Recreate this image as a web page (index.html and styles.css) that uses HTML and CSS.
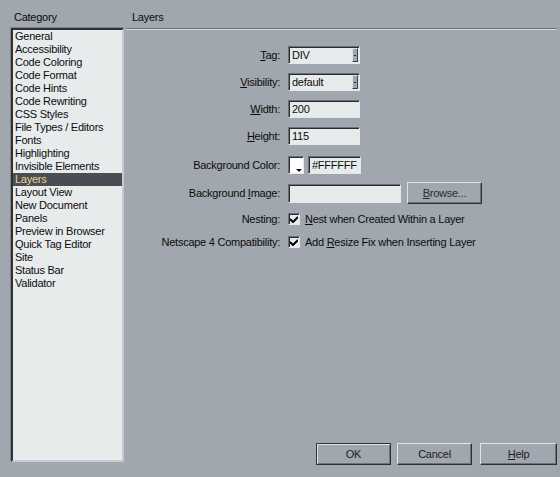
FILE: index.html
```html
<!DOCTYPE html>
<html lang='en'>

<head>
    <meta charset='UTF-8'>
    <title>Preferences</title>
    <link rel="stylesheet" href="styles.css">
</head>

<body>
    <div class="dialog">
        <div class="sidebar">
            <div class="caption">Category</div>
            <ul class="list">
                <li>General</li>
                <li>Accessibility</li>
                <li>Code Coloring</li>
                <li>Code Format</li>
                <li>Code Hints</li>
                <li>Code Rewriting</li>
                <li>CSS Styles</li>
                <li>File Types / Editors</li>
                <li>Fonts</li>
                <li>Highlighting</li>
                <li>Invisible Elements</li>
                <li class="selected">Layers</li>
                <li>Layout View</li>
                <li>New Document</li>
                <li>Panels</li>
                <li>Preview in Browser</li>
                <li>Quick Tag Editor</li>
                <li>Site</li>
                <li>Status Bar</li>
                <li>Validator</li>
            </ul>
        </div>
        <div class="main">
            <div class="caption etched">Layers</div>
            <div class="fields">
                <div class="field">
                    <label><u>T</u>ag:</label>
                    <div class="select"><span>DIV</span><i class="drop"></i></div>
                </div>
                <div class="field">
                    <label><u>V</u>isibility:</label>
                    <div class="select"><span>default</span><i class="drop"></i></div>
                </div>
                <div class="field">
                    <label><u>W</u>idth:</label>
                    <div class="input short">200</div>
                </div>
                <div class="field">
                    <label><u>H</u>eight:</label>
                    <div class="input short">115</div>
                </div>
                <div class="field spaced">
                    <label>Background Color:</label>
                    <div class="swatch"><i class="corner"></i></div>
                    <div class="input hex">#FFFFFF</div>
                </div>
                <div class="field tall">
                    <label>Background <u>I</u>mage:</label>
                    <div class="input long"></div>
                    <div class="button browse"><u>B</u>rowse...</div>
                </div>
                <div class="field check">
                    <label>Nesting:</label>
                    <div class="box">
                        <svg width="8" height="7" viewBox="0 0 8 7"><path d="M0 3 L3 6 L8 1" fill="none" stroke="#000" stroke-width="2"/></svg>
                    </div>
                    <span><u>N</u>est when Created Within a Layer</span>
                </div>
                <div class="field check">
                    <label>Netscape 4 Compatibility:</label>
                    <div class="box">
                        <svg width="8" height="7" viewBox="0 0 8 7"><path d="M0 3 L3 6 L8 1" fill="none" stroke="#000" stroke-width="2"/></svg>
                    </div>
                    <span>Add <u>R</u>esize Fix when Inserting Layer</span>
                </div>
            </div>
            <div class="footer">
                <div class="button default">OK</div>
                <div class="button cancel">Cancel</div>
                <div class="button help"><u>H</u>elp</div>
            </div>
        </div>
    </div>
</body>

</html>
```

FILE: styles.css
```css
* {
    padding: 0;
    margin: 0;
    box-sizing: border-box;
}

body {
    background: #a0a7ae;
    font-family: "Liberation Sans", Arial, sans-serif;
    font-size: 11px;
    letter-spacing: -0.25px;
    color: #0c0c0c;
}

.dialog {
    height: 477px;
    display: flex;
    flex-direction: row;
    padding: 9px 3px 12px 11px;
}

.caption {
    height: 19px;
    line-height: 17px;
    padding-left: 3px;
}

/* category list */
.sidebar {
    width: 113px;
    display: flex;
    flex-direction: column;
    margin-bottom: 3px;
}

.list {
    flex: 1;
    list-style: none;
    background: #e7ebec;
    border-left: 2px solid #2e3135;
    border-top: 2px solid #2e3135;
    border-right: 2px solid #c5cbd0;
    border-bottom: 2px solid #c5cbd0;
    box-shadow: -1px -1px 0 #7d848b;
}

.list li {
    height: 13px;
    line-height: 13px;
    padding-left: 2px;
    white-space: nowrap;
}

.list li.selected {
    background: #4b4d54;
    color: #e8d48a;
}

/* right panel */
.main {
    flex: 1;
    margin-left: 2px;
    display: flex;
    flex-direction: column;
}

.main .caption {
    padding-left: 6px;
}

.etched {
    border-bottom: 1px solid #d8dcdf;
    box-shadow: inset 0 -1px 0 #6c7279;
    height: 21px;
}

.fields {
    margin-top: 16px;
    display: flex;
    flex-direction: column;
    gap: 9px;
}

.field {
    display: flex;
    flex-direction: row;
    align-items: center;
    height: 18px;
}

.field label {
    width: 154px;
    text-align: right;
    margin-right: 8px;
    flex-shrink: 0;
}

.field.spaced {
    margin-top: 2px;
}

.field.tall {
    height: 22px;
    margin-top: -1px;
}

.field.check {
    height: 14px;
    margin-top: -1px;
}

.field.check + .field.check {
    margin-top: 0;
}

/* sunken controls */
.input,
.select,
.swatch,
.box {
    background: #e7ebec;
    border-left: 1px solid #6a7077;
    border-top: 1px solid #6a7077;
    border-right: 1px solid #e4e8ea;
    border-bottom: 1px solid #e4e8ea;
    box-shadow: inset 1px 1px 0 #2a2c30;
    height: 18px;
    line-height: 16px;
    padding-left: 3px;
}

.short {
    width: 72px;
}

.hex {
    width: 53px;
    margin-left: 4px;
}

.long {
    width: 113px;
    height: 19px;
}

.select {
    width: 72px;
    display: flex;
    flex-direction: row;
    justify-content: space-between;
}

.drop {
    width: 6px;
    margin: 1px 1px 1px 0;
    background: #a0a7ae;
    border-left: 1px solid #dde1e4;
    border-top: 1px solid #dde1e4;
    border-right: 1px solid #3c4045;
    border-bottom: 1px solid #3c4045;
    position: relative;
}

.drop::after {
    content: "";
    position: absolute;
    left: 1px;
    top: 6px;
    width: 2px;
    height: 1px;
    background: #222;
}

.swatch {
    width: 16px;
    background: #fff;
    position: relative;
    padding: 0;
}

.corner {
    position: absolute;
    right: 1px;
    bottom: 1px;
    width: 0;
    height: 0;
    border-left: 3px solid transparent;
    border-right: 3px solid transparent;
    border-top: 3px solid #111;
}

.box {
    width: 12px;
    height: 12px;
    padding: 0;
    display: flex;
    align-items: center;
    justify-content: center;
    margin-right: 5px;
}

/* raised buttons */
.button {
    width: 75px;
    height: 22px;
    line-height: 20px;
    text-align: center;
    background: #a0a7ae;
    color: #1e2024;
    border-left: 1px solid #dfe3e6;
    border-top: 1px solid #dfe3e6;
    border-right: 1px solid #2e3135;
    border-bottom: 1px solid #2e3135;
    box-shadow: inset -1px -1px 0 #6c7279;
}

.browse {
    margin-left: 6px;
    color: #2a2d31;
}

.button.default {
    outline: 1px solid #2e3135;
    outline-offset: -1px;
    border: 1px solid #2e3135;
    box-shadow: inset 1px 1px 0 #dfe3e6, inset -1px -1px 0 #6c7279;
}

.footer {
    margin-top: auto;
    display: flex;
    flex-direction: row;
    justify-content: flex-end;
}

.cancel {
    margin-left: 6px;
}

.help {
    width: 77px;
    margin-left: 8px;
}
```
